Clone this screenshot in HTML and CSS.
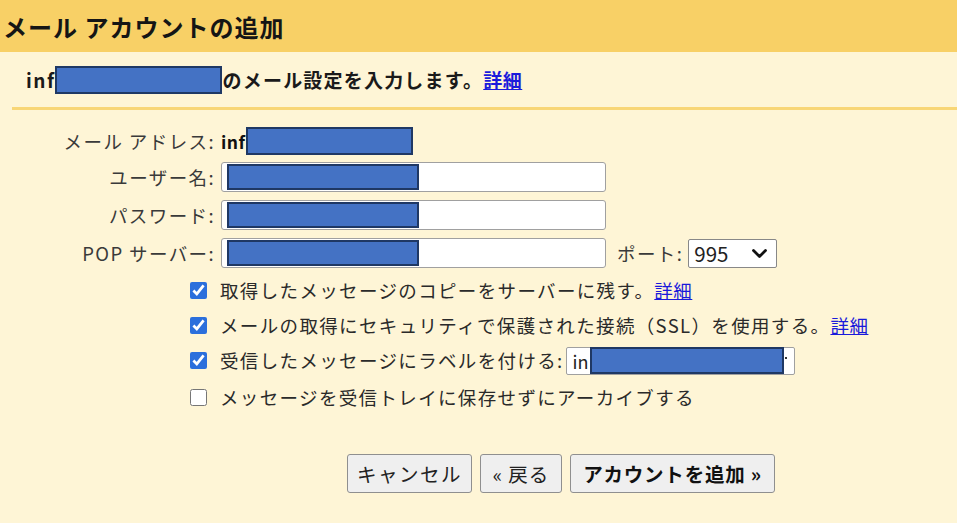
FILE: index.html
```html
<!DOCTYPE html>
<html lang="ja">
<head>
<meta charset="utf-8">
<title>メール アカウントの追加</title>
<link rel="stylesheet" href="styles.css">
</head>
<body>
<div class="page">
  <header class="head"><h1 class="title">メール アカウントの追加</h1></header>
  <div class="intro">
    <span class="intro-text latin">inf</span><span class="redact redact-intro"></span><span class="intro-text">のメール設定を入力します。</span><a class="link intro-link" href="#">詳細</a>
  </div>
  <div class="rule"></div>
  <div class="form">
    <div class="label">メール アドレス:</div>
    <div class="value email"><span class="email-text">inf</span><span class="redact redact-email"></span></div>

    <div class="label">ユーザー名:</div>
    <div class="value"><div class="field"><span class="redact redact-field"></span></div></div>

    <div class="label">パスワード:</div>
    <div class="value"><div class="field"><span class="redact redact-field"></span></div></div>

    <div class="label">POP サーバー:</div>
    <div class="value">
      <div class="field"><span class="redact redact-field"></span></div>
      <span class="port-label">ポート:</span>
      <div class="select"><span>995</span>
        <svg class="chev" width="17" height="11" viewBox="0 0 17 11"><path d="M2.5 2.5 L8.5 8.5 L14.5 2.5" fill="none" stroke="#111" stroke-width="2.8" stroke-linecap="round" stroke-linejoin="round"/></svg>
      </div>
    </div>
  </div>

  <div class="options">
    <label class="opt"><input type="checkbox" class="cb" checked><span>取得したメッセージのコピーをサーバーに残す。</span><a class="link" href="#">詳細</a></label>
    <label class="opt"><input type="checkbox" class="cb" checked><span>メールの取得にセキュリティで保護された接続（SSL）を使用する。</span><a class="link" href="#">詳細</a></label>
    <label class="opt"><input type="checkbox" class="cb" checked><span>受信したメッセージにラベルを付ける:</span>
      <span class="label-field"><span class="lf-text">in</span><span class="redact redact-label"></span><span class="dot"></span></span>
    </label>
    <label class="opt opt-last"><input type="checkbox" class="cb"><span>メッセージを受信トレイに保存せずにアーカイブする</span></label>
  </div>

  <div class="buttons">
    <button class="btn btn-cancel" type="button">キャンセル</button>
    <button class="btn btn-back" type="button">« 戻る</button>
    <button class="btn btn-add" type="button">アカウントを追加 »</button>
  </div>
</div>
</body>
</html>
```
FILE: styles.css
```css
html, body {
  margin: 0;
  padding: 0;
}
body {
  background: #fef5d6;
  font-family: "Noto Sans CJK JP", "Noto Sans", "Liberation Sans", sans-serif;
  color: #222;
  width: 957px;
  height: 523px;
  overflow: hidden;
}
.page {
  display: flex;
  flex-direction: column;
}
.head {
  height: 52px;
  background: #f8d066;
  display: flex;
  align-items: center;
  padding-left: 3px;
}
.title {
  margin: 0;
  font-size: 24px;
  font-weight: 700;
  color: #151515;
  letter-spacing: 1px;
  line-height: 1;
  padding-top: 2px;
}
.intro {
  height: 55px;
  display: flex;
  align-items: center;
  padding-left: 26px;
  font-size: 19px;
  font-weight: 700;
  color: #1a1a1a;
  letter-spacing: 1.2px;
}
.intro-text {
  line-height: 1;
}
.intro .latin {
  letter-spacing: 1.5px;
}
.intro-link {
  margin-left: -2px;
  font-weight: 700;
  letter-spacing: 0.5px;
}
.redact {
  display: inline-block;
  background: #4472c4;
  border: 2px solid #1f3864;
  box-sizing: border-box;
}
.redact-intro {
  width: 167px;
  height: 28px;
  margin-left: -1px;
  margin-right: 1px;
}
.rule {
  margin-left: 12px;
  height: 3px;
  background: #f8d676;
}
.form {
  display: grid;
  grid-template-columns: 215px 1fr;
  column-gap: 6px;
  row-gap: 8px;
  grid-auto-rows: 30px;
  grid-template-rows: 26px;
  margin-top: 18px;
  font-size: 18.5px;
  color: #333;
}
.label {
  text-align: right;
  display: flex;
  align-items: center;
  justify-content: flex-end;
  white-space: nowrap;
  line-height: 1;
  color: #3a3a3a;
  letter-spacing: 1.4px;
}
.value {
  display: flex;
  align-items: center;
}
.email-text {
  font-weight: 700;
  color: #111;
  font-size: 17.5px;
  letter-spacing: 0.5px;
}
.redact-email {
  width: 167px;
  height: 28px;
  flex-shrink: 0;
}
.field {
  width: 385px;
  height: 30px;
  box-sizing: border-box;
  background: #fff;
  border: 1px solid #a0a0a0;
  border-radius: 3px;
  display: flex;
  align-items: center;
  padding-left: 5px;
}
.redact-field {
  width: 192px;
  height: 26px;
}
.port-label {
  margin-left: 11px;
  margin-right: 5px;
  line-height: 1;
  color: #3a3a3a;
  letter-spacing: 1.4px;
}
.select {
  width: 89px;
  height: 29px;
  box-sizing: border-box;
  background: #fff;
  border: 1px solid #888;
  border-radius: 2px;
  display: flex;
  align-items: center;
  justify-content: space-between;
  padding: 0 8px 0 5px;
  font-size: 20.5px;
  color: #222;
  line-height: 1;
}
.chev {
  display: block;
}
.options {
  display: flex;
  flex-direction: column;
  margin-top: 5px;
  padding-left: 189px;
  font-size: 18.5px;
  color: #2a2a2a;
  letter-spacing: 1.35px;
}
.opt {
  height: 35px;
  display: flex;
  align-items: center;
  white-space: nowrap;
  line-height: 1;
}
.opt-last {
  margin-top: 2px;
}
.cb {
  width: 17px;
  height: 17px;
  margin: 0 13px 0 1px;
  accent-color: #2b6fdc;
}
.link {
  color: #1a1adb;
  text-decoration: underline;
  margin-left: 0;
  letter-spacing: 0.5px;
}
.label-field {
  margin-left: 2px;
  width: 229px;
  height: 28px;
  box-sizing: border-box;
  background: #fff;
  border: 1px solid #a0a0a0;
  border-radius: 2px;
  display: flex;
  align-items: center;
  padding-left: 6px;
  font-size: 18px;
  color: #222;
  letter-spacing: 0;
}
.redact-label {
  width: 194px;
  height: 27px;
  margin-left: 1px;
}
.dot {
  width: 2px;
  height: 2px;
  background: #333;
  margin-left: 1px;
  margin-bottom: 6px;
}
.buttons {
  display: flex;
  gap: 8px;
  margin-top: 39px;
  padding-left: 347px;
}
.btn {
  height: 39px;
  box-sizing: border-box;
  background: #efefef;
  border: 1px solid #8f8f8f;
  border-radius: 3px;
  font-family: "Noto Sans CJK JP", "Noto Sans", sans-serif;
  font-size: 19.5px;
  color: #222;
  padding: 0;
  line-height: 1;
}
.btn-cancel { width: 125px; letter-spacing: 1.5px; }
.btn-back { width: 82px; letter-spacing: 1px; }
.btn-add { width: 205px; font-weight: 700; color: #111; letter-spacing: 0.8px; }
```
